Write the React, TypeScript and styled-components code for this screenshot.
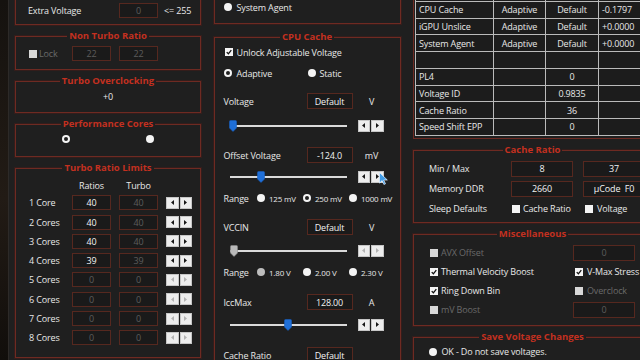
import React from 'react';
import styled, { createGlobalStyle } from 'styled-components';

const BG = '#1f1f1f';
const RED = '#6e2a22';

const GlobalStyle = createGlobalStyle`
    html, body {
        margin: 0;
        padding: 0;
        background: ${BG};
    }
    * {
        box-sizing: border-box;
    }
`;

const Screen = styled.div`
    width: 640px;
    height: 360px;
    overflow: hidden;
    display: flex;
    background: ${BG};
    color: #e8e8e8;
    font-family: 'Open Sans', 'Noto Sans', sans-serif;
    font-size: 9px;
    letter-spacing: -0.15px;
`;

const Desktop = styled.div`
    flex: 0 0 9px;
    background: linear-gradient(180deg, #15120f 0%, #221b15 55%, #110e0b 100%);
    border-right: 1px solid #2d2a28;
`;

const Window = styled.div`
    display: flex;
    gap: 12.5px;
    padding-left: 6px;
`;

const Column = styled.div<{ $w: number; $top: number; $gap: number }>`
    flex: 0 0 ${(p) => p.$w}px;
    display: flex;
    flex-direction: column;
    gap: ${(p) => p.$gap}px;
    margin-top: ${(p) => p.$top}px;
`;

const Panel = styled.div<{ $h: number }>`
    flex-shrink: 0;
    height: ${(p) => p.$h}px;
    display: flex;
    flex-direction: column;
    border: 1px solid ${RED};
    box-shadow: 0 0 0 1px rgba(90, 26, 20, 0.35);
`;

const CutPanel = styled(Panel)`
    justify-content: flex-end;
`;

const Legend = styled.div`
    align-self: center;
    margin-top: -7px;
    height: 12px;
    line-height: 12px;
    padding: 0 2px;
    background: ${BG};
    color: #c3301f;
    font-weight: 700;
    font-size: 9.5px;
    letter-spacing: 0;
`;

const Field = styled.div<{ $dim?: boolean }>`
    display: flex;
    align-items: center;
    justify-content: center;
    border: 1px solid #56281f;
    background: #1a1a1a;
    color: ${(p) => (p.$dim ? '#5c5c5c' : '#f2f2f2')};
    white-space: pre;
`;

const Label = styled.div<{ $dim?: boolean }>`
    display: flex;
    align-items: center;
    white-space: nowrap;
    color: ${(p) => (p.$dim ? '#6a6a6a' : '#e8e8e8')};
`;

const Unit = styled.div`
    display: flex;
    align-items: center;
    justify-content: center;
`;

/* ---------- small controls ---------- */

const BoxMark = styled.span<{ $off?: boolean }>`
    flex-shrink: 0;
    width: 8px;
    height: 8px;
    display: inline-flex;
    align-items: center;
    justify-content: center;
    background: ${(p) => (p.$off ? '#d8d8d8' : '#f4f4f4')};
`;

const CheckLine = styled.div<{ $gap?: number; $indent?: number }>`
    display: flex;
    align-items: center;
    gap: ${(p) => p.$gap ?? 3}px;
    margin-left: ${(p) => p.$indent ?? 0}px;
    white-space: nowrap;
`;

const Check = ({
    text,
    on,
    off,
    gap,
    indent,
}: {
    text: string;
    on?: boolean;
    off?: boolean;
    gap?: number;
    indent?: number;
}) => (
    <CheckLine $gap={gap} $indent={indent}>
        <BoxMark $off={off}>
            {on && (
                <svg width="6" height="6" viewBox="0 0 6 6">
                    <path d="M.7 3.1 2.4 4.8 5.3 1.1" fill="none" stroke="#111" strokeWidth="1.3" />
                </svg>
            )}
        </BoxMark>
        <Label $dim={off}>{text}</Label>
    </CheckLine>
);

const Dot = styled.span<{ $on?: boolean; $off?: boolean }>`
    flex-shrink: 0;
    width: 8px;
    height: 8px;
    border-radius: 50%;
    display: inline-flex;
    align-items: center;
    justify-content: center;
    background: ${(p) => (p.$off ? '#bdbdbd' : '#f4f4f4')};
    &::after {
        content: '';
        display: ${(p) => (p.$on ? 'block' : 'none')};
        width: 4px;
        height: 4px;
        border-radius: 50%;
        background: ${BG};
    }
`;

const RadioItem = styled.div<{ $w?: number; $gap?: number }>`
    display: flex;
    align-items: center;
    gap: ${(p) => p.$gap ?? 4}px;
    width: ${(p) => (p.$w ? `${p.$w}px` : 'auto')};
    white-space: nowrap;
`;

const SpinWrap = styled.div`
    position: relative;
    align-self: center;
    display: flex;
    gap: 1px;
    width: 26px;
    height: 12px;
    flex-shrink: 0;
`;

const SpinBtn = styled.div<{ $off?: boolean }>`
    flex: 1;
    display: flex;
    align-items: center;
    justify-content: center;
    background: #ededed;
    border: 1px solid #c6c6c6;
    color: ${(p) => (p.$off ? '#b3b3b3' : '#161616')};
`;

const Pointer = styled.svg`
    position: absolute;
    left: 21px;
    top: 1px;
`;

const Spinner = ({ off, cursor }: { off?: boolean; cursor?: boolean }) => (
    <SpinWrap>
        <SpinBtn $off={off}>
            <svg width="3" height="5" viewBox="0 0 3 5">
                <path d="M3 0 0 2.5 3 5Z" fill="currentColor" />
            </svg>
        </SpinBtn>
        <SpinBtn $off={off}>
            <svg width="3" height="5" viewBox="0 0 3 5">
                <path d="M0 0 3 2.5 0 5Z" fill="currentColor" />
            </svg>
        </SpinBtn>
        {cursor && (
            <Pointer width="9" height="13" viewBox="0 0 9 13">
                <path
                    d="M.5.5v10.6l2.6-2.5 1.8 3.9 1.6-.7-1.8-3.8h3.6Z"
                    fill="#3f9be6"
                    stroke="#e9f4ff"
                    strokeWidth=".7"
                />
            </Pointer>
        )}
    </SpinWrap>
);

/* ---------- slider ---------- */

const SliderRow = styled.div<{ $mt: number }>`
    display: flex;
    align-items: center;
    height: 13px;
    margin-top: ${(p) => p.$mt}px;
`;

const Track = styled.div`
    position: relative;
    width: 117px;
    height: 2px;
    margin: 0 11px 0 6px;
    background: #dadada;
`;

const ThumbSvg = styled.svg`
    position: absolute;
    top: -5px;
`;

const Slider = ({ at, mt, off, cursor }: { at: number; mt: number; off?: boolean; cursor?: boolean }) => (
    <SliderRow $mt={mt}>
        <Track>
            <ThumbSvg width="8" height="12" viewBox="0 0 8 12" style={{ left: at - 4 }}>
                <path
                    d="M1.5.5h5a1 1 0 0 1 1 1V8L4 11.5.5 8V1.5a1 1 0 0 1 1-1Z"
                    fill={off ? '#b9b9b9' : '#1f6fd8'}
                    stroke={off ? '#8c8c8c' : '#1a5fbf'}
                    strokeWidth=".6"
                />
            </ThumbSvg>
        </Track>
        <Spinner off={off} cursor={cursor} />
    </SliderRow>
);

/* ---------- left column ---------- */

const ExtraRow = styled.div`
    display: grid;
    grid-template-columns: 91px 39px auto;
    height: 15px;
    padding-left: 12px;
    margin-bottom: 6px;
`;

const UnitText = styled.div`
    display: flex;
    align-items: center;
    margin-left: 6px;
`;

const RatioGrid = styled.div<{ $rows: string; $pt: number }>`
    display: grid;
    grid-template-columns: 35px 39px 39px 26px;
    grid-template-rows: ${(p) => p.$rows};
    column-gap: 8px;
    row-gap: 4.3px;
    padding: ${(p) => p.$pt}px 0 0 13px;
`;

const Head = styled.div`
    display: flex;
    align-items: center;
    justify-content: center;
`;

const CenterText = styled.div`
    padding-top: 4px;
    height: 16px;
    line-height: 12px;
    text-align: center;
`;

const CoreDots = styled.div`
    display: flex;
    gap: 76px;
    padding: 5px 0 0 46px;
`;

const cores = [
    { name: '1 Core', ratio: '40', on: true },
    { name: '2 Cores', ratio: '40', on: true },
    { name: '3 Cores', ratio: '40', on: true },
    { name: '4 Cores', ratio: '39', on: true },
    { name: '5 Cores', ratio: '0', on: false },
    { name: '6 Cores', ratio: '0', on: false },
    { name: '7 Cores', ratio: '0', on: false },
    { name: '8 Cores', ratio: '0', on: false },
];

/* ---------- middle column ---------- */

const CacheBody = styled.div`
    display: flex;
    flex-direction: column;
    padding-left: 9px;
`;

const TopRow = styled.div<{ $mt: number; $indent?: number }>`
    display: flex;
    align-items: center;
    height: 12px;
    margin-top: ${(p) => p.$mt}px;
    padding-left: ${(p) => p.$indent ?? 0}px;
`;

const ValueRow = styled.div<{ $mt: number }>`
    display: grid;
    grid-template-columns: 83px 46px 38px;
    height: 16px;
    margin-top: ${(p) => p.$mt}px;
`;

const RangeRow = styled.div<{ $mt: number }>`
    display: flex;
    align-items: center;
    height: 12px;
    margin-top: ${(p) => p.$mt}px;
    font-size: 8px;
    letter-spacing: -0.2px;
`;

const RangeLabel = styled.div`
    width: 33.5px;
    font-size: 9px;
    letter-spacing: -0.15px;
`;

const Range = ({ mt, items, pick, off }: { mt: number; items: string[]; pick: number; off?: number }) => (
    <RangeRow $mt={mt}>
        <RangeLabel>Range</RangeLabel>
        {items.map((t, i) => (
            <RadioItem key={t} $w={46} $gap={4}>
                <Dot $on={i === pick} $off={i === off} />
                {t}
            </RadioItem>
        ))}
    </RangeRow>
);

/* ---------- right column ---------- */

const TableBox = styled.div`
    flex-shrink: 0;
    border: 1px solid ${RED};
    border-top: none;
    padding: 0 1px 2px;
`;

const Table = styled.div`
    display: grid;
    grid-template-columns: 77px 51px 52px 1fr;
    grid-auto-rows: 15.75px;
    gap: 1px;
    padding: 1px;
    background: #bababa;
`;

const Cell = styled.div<{ $align: 'left' | 'center' }>`
    display: flex;
    align-items: center;
    justify-content: ${(p) => (p.$align === 'center' ? 'center' : 'flex-start')};
    padding: 0 ${(p) => (p.$align === 'center' ? 0 : 3)}px;
    background: #1c1c1c;
    white-space: nowrap;
    overflow: hidden;
`;

// first row sits above the visible area
const tableRows = [
    ['', '', '', ''],
    ['CPU Cache', 'Adaptive', 'Default', '-0.1797'],
    ['iGPU Unslice', 'Adaptive', 'Default', '+0.0000'],
    ['System Agent', 'Adaptive', 'Default', '+0.0000'],
    ['', '', '', ''],
    ['PL4', '', '0', ''],
    ['Voltage ID', '', '0.9835', ''],
    ['Cache Ratio', '', '36', ''],
    ['Speed Shift EPP', '', '0', ''],
];

const FormGrid = styled.div<{ $cols: string; $rowGap: number; $left: number }>`
    display: grid;
    grid-template-columns: ${(p) => p.$cols};
    grid-auto-rows: 16px;
    column-gap: 10px;
    row-gap: ${(p) => p.$rowGap}px;
    padding: 5px 0 0 ${(p) => p.$left}px;
`;

const MiscGrid = styled(FormGrid)`
    column-gap: 0;
`;

const SaveRow = styled.div`
    display: flex;
    align-items: center;
    height: 12px;
    margin-top: 3px;
    padding-left: 14.5px;
`;

const App = () => {
    return (
        <>
            <GlobalStyle />
            <Screen>
                <Desktop />
                <Window>
                    <Column $w={186} $top={-12} $gap={11}>
                        <CutPanel $h={37}>
                            <ExtraRow>
                                <Label>Extra Voltage</Label>
                                <Field $dim>0</Field>
                                <UnitText>&lt;= 255</UnitText>
                            </ExtraRow>
                        </CutPanel>
                        <Panel $h={34}>
                            <Legend>Non Turbo Ratio</Legend>
                            <RatioGrid $rows="15px" $pt={4}>
                                <Check text="Lock" off gap={2} />
                                <Field $dim>22</Field>
                                <Field $dim>22</Field>
                            </RatioGrid>
                        </Panel>
                        <Panel $h={32}>
                            <Legend>Turbo Overclocking</Legend>
                            <CenterText>+0</CenterText>
                        </Panel>
                        <Panel $h={33}>
                            <Legend>Performance Cores</Legend>
                            <CoreDots>
                                <Dot $on />
                                <Dot />
                            </CoreDots>
                        </Panel>
                        <Panel $h={190}>
                            <Legend>Turbo Ratio Limits</Legend>
                            <RatioGrid $rows="12px repeat(8, 15px)" $pt={5}>
                                <span />
                                <Head>Ratios</Head>
                                <Head>Turbo</Head>
                                <span />
                                {cores.map((c) => (
                                    <React.Fragment key={c.name}>
                                        <Label>{c.name}</Label>
                                        <Field $dim={!c.on}>{c.ratio}</Field>
                                        <Field $dim>{c.ratio}</Field>
                                        <Spinner off={!c.on} />
                                    </React.Fragment>
                                ))}
                            </RatioGrid>
                        </Panel>
                    </Column>

                    <Column $w={187} $top={-20} $gap={13}>
                        <CutPanel $h={44}>
                            <TopRow $mt={0} $indent={9.5}>
                                <RadioItem $gap={4.5}>
                                    <Dot />
                                    System Agent
                                </RadioItem>
                            </TopRow>
                            <div style={{ height: 10 }} />
                        </CutPanel>
                        <Panel $h={340}>
                            <Legend>CPU Cache</Legend>
                            <CacheBody>
                                <TopRow $mt={3} $indent={1}>
                                    <Check text="Unlock Adjustable Voltage" on gap={4} />
                                </TopRow>
                                <TopRow $mt={9} $indent={0.5}>
                                    <RadioItem $w={84} $gap={4.5}>
                                        <Dot $on />
                                        Adaptive
                                    </RadioItem>
                                    <RadioItem $gap={3.5}>
                                        <Dot />
                                        Static
                                    </RadioItem>
                                </TopRow>
                                <ValueRow $mt={14}>
                                    <Label>Voltage</Label>
                                    <Field>Default</Field>
                                    <Unit>V</Unit>
                                </ValueRow>
                                <Slider at={3} mt={10} />
                                <ValueRow $mt={15}>
                                    <Label>Offset Voltage</Label>
                                    <Field>-124.0</Field>
                                    <Unit>mV</Unit>
                                </ValueRow>
                                <Slider at={31} mt={7} cursor />
                                <Range mt={9} items={['125 mV', '250 mV', '1000 mV']} pick={1} />
                                <ValueRow $mt={15}>
                                    <Label>VCCIN</Label>
                                    <Field>Default</Field>
                                    <Unit>V</Unit>
                                </ValueRow>
                                <Slider at={4} mt={9} off />
                                <Range mt={9} items={['1.80 V', '2.00 V', '2.30 V']} pick={-1} off={0} />
                                <ValueRow $mt={16}>
                                    <Label>IccMax</Label>
                                    <Field>128.00</Field>
                                    <Unit>A</Unit>
                                </ValueRow>
                                <Slider at={58} mt={8} />
                                <ValueRow $mt={16}>
                                    <Label>Cache Ratio</Label>
                                    <Field>Default</Field>
                                    <Unit />
                                </ValueRow>
                            </CacheBody>
                        </Panel>
                    </Column>

                    <Column $w={239} $top={-16} $gap={11}>
                        <TableBox>
                            <Table>
                                {tableRows.map((row, r) =>
                                    row.map((v, c) => (
                                        <Cell key={`${r}-${c}`} $align={c === 1 || c === 2 ? 'center' : 'left'}>
                                            {v}
                                        </Cell>
                                    )),
                                )}
                            </Table>
                        </TableBox>
                        <Panel $h={73}>
                            <Legend>Cache Ratio</Legend>
                            <FormGrid $cols="72px 62px 62px" $rowGap={4} $left={15}>
                                <Label>Min / Max</Label>
                                <Field>8</Field>
                                <Field>37</Field>
                                <Label>Memory DDR</Label>
                                <Field>2660</Field>
                                <Field>{'µCode  F0'}</Field>
                                <Label>Sleep Defaults</Label>
                                <Check text="Cache Ratio" indent={1} gap={3} />
                                <Check text="Voltage" indent={2} gap={4} />
                            </FormGrid>
                        </Panel>
                        <Panel $h={92}>
                            <Legend>Miscellaneous</Legend>
                            <MiscGrid $cols="143px 62px" $rowGap={3} $left={16}>
                                <Check text="AVX Offset" off />
                                <Field $dim>0</Field>
                                <Check text="Thermal Velocity Boost" on />
                                <Check text="V-Max Stress" on indent={2} gap={4} />
                                <Check text="Ring Down Bin" on />
                                <Check text="Overclock" off indent={2} gap={4} />
                                <Check text="mV Boost" off />
                                <Field $dim>0</Field>
                            </MiscGrid>
                        </Panel>
                        <Panel $h={40}>
                            <Legend>Save Voltage Changes</Legend>
                            <SaveRow>
                                <RadioItem $gap={5}>
                                    <Dot />
                                    OK - Do not save voltages.
                                </RadioItem>
                            </SaveRow>
                        </Panel>
                    </Column>
                </Window>
            </Screen>
        </>
    );
};

export default App;
